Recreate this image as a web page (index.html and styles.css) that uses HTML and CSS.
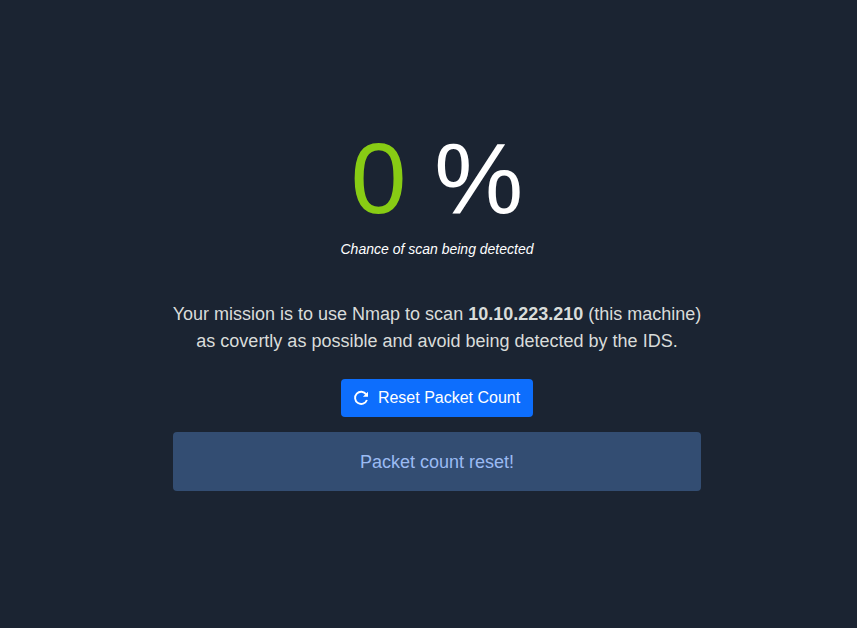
FILE: index.html
```html
<!DOCTYPE html>
<html lang="en">
<head>
<meta charset="utf-8">
<title>IDS Evasion</title>
<link rel="stylesheet" href="styles.css">
</head>
<body>
<main class="panel">
  <div class="score"><span class="value">0</span> %</div>
  <p class="caption">Chance of scan being detected</p>
  <p class="mission">Your mission is to use Nmap to scan <b>10.10.223.210</b> (this machine)<br>as covertly as possible and avoid being detected by the IDS.</p>
  <button class="reset" type="button">
    <svg class="icon" viewBox="0 0 16 16" aria-hidden="true"><path d="M13.2 4.4A6.1 6.1 0 1 0 13.9 10" fill="none" stroke="currentColor" stroke-width="1.9"/><path d="M15 1.7v5.1H9.9z" fill="currentColor"/></svg>
    <span>Reset Packet Count</span>
  </button>
  <div class="alert">Packet count reset!</div>
</main>
</body>
</html>
```

FILE: styles.css
```css
* { box-sizing: border-box; }
body {
  margin: 0;
  height: 628px;
  background: #1b2432;
  color: #fff;
  font-family: "Liberation Sans", Arial, sans-serif;
}
.panel {
  width: 528px;
  margin-left: 173px;
  padding-top: 118px;
  display: flex;
  flex-direction: column;
  align-items: center;
}
.score { font-size: 100px; line-height: 120px; white-space: nowrap; }
.value { color: #88cc14; }
.caption { margin: 1px 0 0; font-size: 14px; line-height: 21px; font-style: italic; }
.mission {
  margin: 41px 0 24px;
  font-size: 18px;
  line-height: 27px;
  text-align: center;
  white-space: nowrap;
  color: #d9dcda;
}
.reset {
  display: flex;
  align-items: center;
  gap: 8.9px;
  width: 192px;
  height: 38px;
  padding: 0 0 0 12px;
  border: 0;
  border-radius: 4px;
  background: #0d6efd;
  color: #fff;
  font: 16px/24px "Liberation Sans", Arial, sans-serif;
}
.icon { width: 16px; height: 16px; }
.alert {
  width: 100%;
  height: 59px;
  margin-top: 15px;
  padding-top: 17px;
  border-radius: 4px;
  background: #334d72;
  color: #9bbbf3;
  font-size: 18px;
  line-height: 27px;
  text-align: center;
}
```
